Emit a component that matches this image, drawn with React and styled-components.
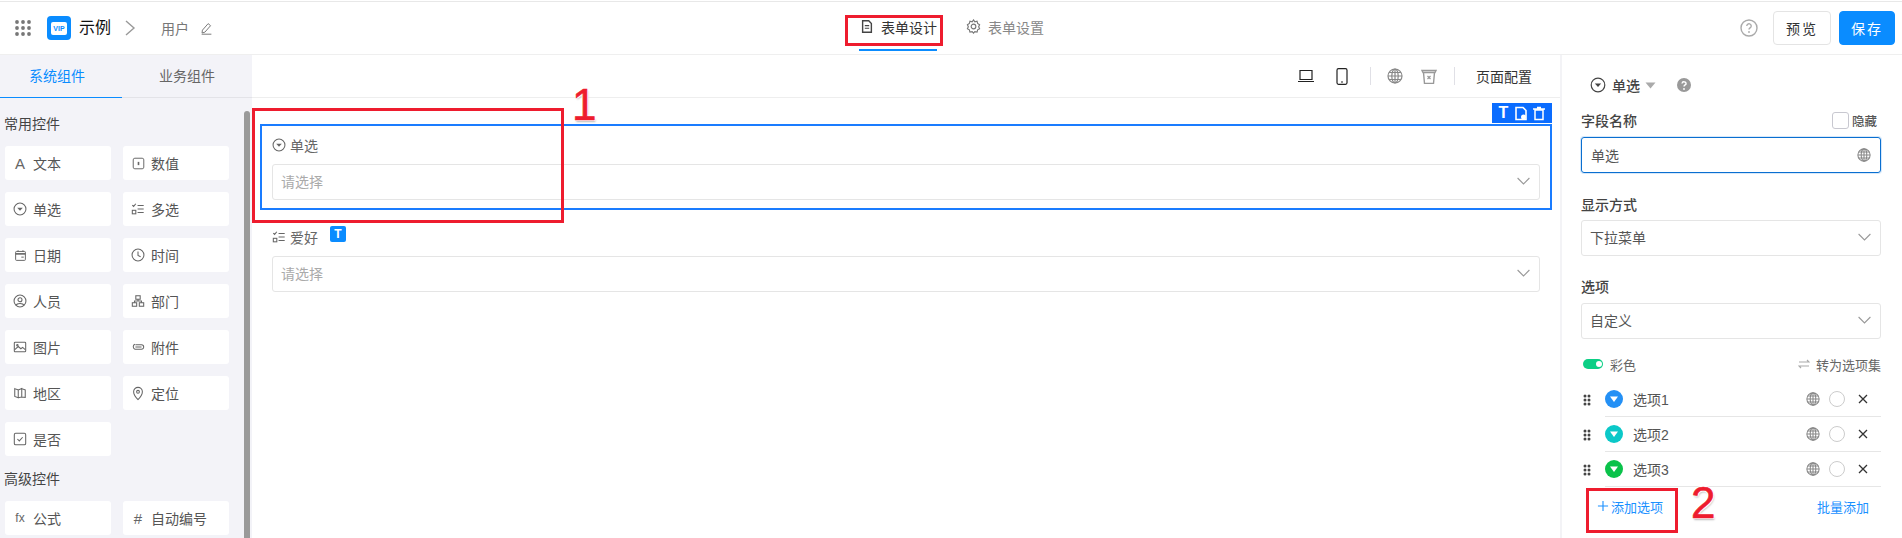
import React from "react";
import styled, { createGlobalStyle } from "styled-components";

const Global = createGlobalStyle`
  html, body { margin: 0; padding: 0; background: #fff; }
  body { font-family: "Liberation Sans", "Noto Sans CJK SC", sans-serif; color: #333; }
  * { box-sizing: border-box; }
`;

const Page = styled.div`
  position: relative;
  width: 1902px;
  height: 538px;
  padding-top: 1px;
  overflow: hidden;
  display: flex;
  flex-direction: column;
  background: #fff;
`;
const Header = styled.header`
  flex: none;
  height: 54px;
  border-top: 1px solid #e8e8e8;
  border-bottom: 1px solid #efefef;
  display: grid;
  grid-template-columns: 1fr auto 1fr;
  align-items: center;
  padding: 0 7px 0 14px;
`;
const Brand = styled.div`display: flex; align-items: center;`;
const Logo = styled.div`
  width: 24px; height: 24px; margin-left: 15px; border-radius: 4px; background: #0a8cff;
  display: flex; align-items: center; justify-content: center;
`;
const LogoInner = styled.span`
  width: 16px; height: 13px; border-radius: 2px; background: #fff; color: #0a8cff;
  font: 700 7px/13px "Liberation Sans", sans-serif; text-align: center; letter-spacing: 0;
`;
const AppName = styled.span`margin-left: 8px; font-size: 16px; line-height: 24px; color: #111;`;
const PageName = styled.span`margin-left: 25px; font-size: 14px; color: #777;`;
const Tabs = styled.nav`display: flex; align-items: flex-start; gap: 28px; height: 100%; transform: translateX(-3px);`;
const TopTab = styled.div`
  height: 49px; display: flex; align-items: center; gap: 7px; font-size: 14px; padding: 2px 0 0 1px;
  color: ${p => (p.$active ? "#333" : "#888")};
  border-bottom: 2px solid ${p => (p.$active ? "#0a8cff" : "transparent")};
`;
const Actions = styled.div`display: flex; align-items: center; justify-content: flex-end;`;
const GhostBtn = styled.button`
  width: 58px; height: 34px; margin-left: 15px; border: 1px solid #e4e4e4; border-radius: 4px;
  background: #fff; color: #333; font: 14px "Liberation Sans", "Noto Sans CJK SC", sans-serif; letter-spacing: 2px;
`;
const PrimaryBtn = styled(GhostBtn)`
  width: 56px; margin-left: 8px; border-color: #0a8cff; background: #0a8cff; color: #fff;
`;
const Body = styled.div`flex: 1; min-height: 0; display: flex;`;

const Sidebar = styled.aside`
  flex: none; width: 252px; background: #f3f3f8; display: flex; flex-direction: column; overflow: hidden;
`;
const SideTabs = styled.div`
  flex: none; height: 43px; display: grid; grid-template-columns: 122px 130px; border-bottom: 1px solid #e3e3e8;
`;
const SideTab = styled.div`
  display: flex; align-items: center; justify-content: center; font-size: 14px; height: 43px;
  padding: 0 ${p => (p.$active ? 8 : 0)}px 3px 0;
  color: ${p => (p.$active ? "#0a8cff" : "#666")};
  border-bottom: 1px solid ${p => (p.$active ? "#0a8cff" : "transparent")};
`;
const SideBody = styled.div`flex: 1; min-height: 0; display: flex;`;
const SideList = styled.div`width: 244px; padding: 16px 0 0 5px;`;
const GroupTitle = styled.div`
  margin-left: -1px; height: 20px; line-height: 20px; font-size: 14px; color: #444; margin-bottom: 12px;
`;
const CardGrid = styled.div`
  display: grid; grid-template-columns: 106px 106px; gap: 12px; margin-bottom: 13px;
`;
const Card = styled.div`
  height: 34px; background: #fff; border-radius: 3px; display: flex; align-items: center;
  padding-left: 7px; gap: 5px; font-size: 14px; color: #555;
`;
const CardIcon = styled.span`
  width: 16px; display: flex; justify-content: center; align-items: center; color: #666; font-size: 12px; flex: none;
`;
const Scrollbar = styled.div`
  width: 6px; margin-top: 13px; background: #9a9a9a; border-radius: 3px 3px 0 0;
`;

const Main = styled.main`flex: 1; min-width: 0; display: flex; flex-direction: column;`;
const Toolbar = styled.div`
  flex: none; height: 43px; border-bottom: 1px solid #eee; display: flex; align-items: center;
  justify-content: flex-end; padding-right: 28px; color: #222;
`;
const ToolGroup = styled.div`display: flex; align-items: center; gap: ${p => p.$gap || 22}px;`;
const Divider = styled.span`width: 1px; height: 18px; background: #e0e0e6; margin: 0 ${p => p.$r || 16}px 0 ${p => p.$l || 22}px;`;
const ToolText = styled.span`font-size: 14px; color: #333; margin-left: 5px;`;
const Canvas = styled.div`padding: 26px 8px 0;`;
const FieldBox = styled.div`
  position: relative; padding: ${p => (p.$selected ? "10px 10px 8px" : "18px 12px 0")};
  border: ${p => (p.$selected ? "2px solid #1a7cff" : "none")};
`;
const FieldLabel = styled.div`
  display: flex; align-items: center; gap: 4px; height: 18px; font-size: 14px; color: #666; margin-bottom: 10px;
`;
const TBadge = styled.span`
  width: 16px; height: 16px; margin: -7px 0 0 8px; border-radius: 2px; background: #0a8cff; color: #fff;
  font: 700 12px/16px "Liberation Sans", sans-serif; text-align: center;
`;
const FakeSelect = styled.div`
  height: 36px; border: 1px solid #e5e5e5; border-radius: 3px; display: flex; align-items: center;
  justify-content: space-between; padding: 0 9px 2px 8px; font-size: 14px;
  color: ${p => (p.$placeholder ? "#aaa" : "#555")}; background: #fff;
`;
const FieldTools = styled.div`
  position: absolute; right: -2px; top: -23px; width: 60px; height: 20px; background: #0a6cff;
  display: flex; align-items: center; justify-content: space-evenly; color: #fff;
`;

const Panel = styled.aside`
  flex: none; width: 342px; border-left: 2px solid #f3f3f6; padding: 0 21px 0 19px; display: flex; flex-direction: column;
`;
const PanelHead = styled.div`
  height: 20px; margin-top: 20px; padding-left: 9px; display: flex; align-items: center; font-size: 14px;
  font-weight: 500; color: #444;
`;
const SectionHead = styled.div`
  display: flex; justify-content: space-between; align-items: center; height: 20px;
  margin: ${p => p.$top}px 0 ${p => p.$bottom}px; font-size: 14px; color: #444; font-weight: 500;
`;
const Hide = styled.label`display: flex; align-items: center; gap: 3px; font-size: 12.5px; color: #555; margin-right: 4px;`;
const Check = styled.span`width: 17px; height: 17px; border: 1px solid #c8c8d0; border-radius: 3px; background: #fff;`;
const TextField = styled.div`
  height: 36px; border: 1px solid #0a6fd0; border-radius: 3px; box-shadow: 0 0 0 1px #d6e8fa;
  display: flex; align-items: center; justify-content: space-between; padding: 0 9px; font-size: 14px; color: #555;
`;
const ColorRow = styled.div`
  height: 20px; margin: 15px 0 8px; display: flex; align-items: center; justify-content: space-between;
  font-size: 13px; color: #666;
`;
const Left = styled.div`display: flex; align-items: center; gap: 7px;`;
const Toggle = styled.span`
  position: relative; width: 20px; height: 10px; margin-left: 2px; border-radius: 5px; background: #0ccf85;
  &::after { content: ""; position: absolute; right: 1px; top: 2px; width: 6px; height: 6px; border-radius: 50%; background: #fff; }
`;
const OptionRow = styled.div`
  height: 35px; padding-left: 2px; display: flex; align-items: center; color: #555; font-size: 14px;
`;
const OptionInner = styled.div`
  flex: 1; height: 35px; margin-left: 14px; border-bottom: 1px solid #e6e6e6; display: flex; align-items: center;
`;
const OptionDot = styled.span`
  width: 18px; height: 18px; border-radius: 50%; background: ${p => p.$color}; flex: none;
  display: flex; align-items: center; justify-content: center;
`;
const OptionName = styled.span`flex: 1; margin-left: 10px;`;
const Radio = styled.span`
  width: 16px; height: 16px; border-radius: 50%; border: 1px solid #ccc; margin: 0 13px 0 9px; flex: none;
`;
const CloseWrap = styled.span`display: flex; margin-right: 13px;`;
const AddRow = styled.div`
  height: 38px; display: flex; align-items: center; justify-content: space-between; color: #1a90ff; font-size: 13px;
  padding: 0 12px 0 16px;
`;
const AddBtn = styled.span`display: flex; align-items: center; gap: 2px;`;

const RedBox = styled.div`
  position: absolute; left: ${p => p.$x}px; top: ${p => p.$y}px; width: ${p => p.$w}px; height: ${p => p.$h}px;
  border: 3px solid #ee1c2e; pointer-events: none;
`;
const Mark = styled.div`
  position: absolute; left: ${p => p.$x}px; top: ${p => p.$y}px; color: #ee1c2e; pointer-events: none;
  font: 44px/44px "Liberation Sans", sans-serif; -webkit-text-stroke: 0.6px #ee1c2e;
  text-shadow: 1px 1px 0 #fff, -1px -1px 0 #fff, 1px -1px 0 #fff, -1px 1px 0 #fff, 1px 2px 2px #bbb;
`;

const S = ({ w = 16, h = 16, vb = "0 0 16 16", children, style }) => (
  <svg width={w} height={h} viewBox={vb} fill="none" stroke="currentColor" strokeWidth="1.2" style={{ display: "block", flex: "none", ...style }}>
    {children}
  </svg>
);
const SelectGlyph = ({ s = 14 }) => (
  <S w={s} h={s}><circle cx="8" cy="8" r="6.8" /><path d="M4.8 6.6h6.4L8 10z" fill="currentColor" stroke="none" /></S>
);
const MultiGlyph = () => (
  <S w={14} h={14}>
    <path d="M1.5 3.5l1.5 1.5 2.5-3M7.5 4h7M7.5 8h7M7.5 12h7" /><rect x="1.5" y="9.5" width="4" height="4" />
  </S>
);
const Globe = ({ s = 16 }) => (
  <S w={s} h={s} style={{ color: "#888" }}>
    <circle cx="8" cy="8" r="7" /><ellipse cx="8" cy="8" rx="3.2" ry="7" /><path d="M1 8h14M2 4.5h12M2 11.5h12M8 1v14" />
  </S>
);
const Chevron = () => (
  <S w={13} h={8} vb="0 0 13 8" style={{ color: "#999" }}><path d="M.6 1l5.9 6 5.9-6" strokeWidth="1.1" /></S>
);
const Close = () => (
  <S w={10} h={10} vb="0 0 10 10" style={{ color: "#333" }}><path d="M1 1l8 8M9 1L1 9" strokeWidth="1.3" /></S>
);
const Dots = ({ n = 3, r = 1.5, gap = 4, color = "#444" }) => {
  const cols = gap === 6 ? 3 : 2;
  const pts = [];
  for (let y = 0; y < n; y++) for (let x = 0; x < cols; x++) pts.push([x, y]);
  return (
    <svg width={cols * gap} height={n * gap} style={{ display: "block", flex: "none", color }}>
      {pts.map(([x, y]) => <circle key={`${x}${y}`} cx={gap / 2 + x * gap} cy={gap / 2 + y * gap} r={r} fill="currentColor" />)}
    </svg>
  );
};
const TriDown = () => (
  <svg width="10" height="8" viewBox="0 0 10 8" style={{ display: "block" }}><path d="M1 1.5h8L5 7z" fill="#fff" /></svg>
);

const icons = {
  text: <span style={{ fontSize: 15 }}>A</span>,
  number: <S w={13} h={13}><rect x="1.5" y="1.5" width="13" height="13" rx="2" /><path d="M7 6h2v4H7z" fill="currentColor" stroke="none" /></S>,
  select: <SelectGlyph s={14} />,
  multi: <MultiGlyph />,
  date: <S w={13} h={13}><rect x="2" y="3" width="12" height="11" rx="1" /><path d="M2 6h12" strokeWidth="2" /><path d="M5 1.5v2M11 1.5v2M9 10h3" /></S>,
  time: <S w={14} h={14}><circle cx="8" cy="8" r="6.8" /><path d="M8 4v4.5l3 1.5" /></S>,
  user: <S w={14} h={14}><circle cx="8" cy="8" r="6.8" /><circle cx="8" cy="6.5" r="2.3" /><path d="M3.5 13c1-3 8-3 9 0" /></S>,
  dept: <S w={14} h={14}><rect x="5.5" y="2" width="5" height="4" /><rect x="1.5" y="10" width="5" height="4" /><rect x="9.5" y="10" width="5" height="4" /><path d="M8 6v2M4 10V8h8v2" /></S>,
  image: <S w={14} h={14}><rect x="1.5" y="2.5" width="13" height="11" rx="1" /><path d="M2 11l4-3.5 3 2.5 2-1.5 3 2.5" /><circle cx="5" cy="6" r=".8" /></S>,
  attach: <S w={14} h={14}><path d="M5 5.5h7a2.5 2.5 0 010 5H4.5a3 3 0 010-5.6M5 8h7" /></S>,
  map: <S w={14} h={14}><path d="M2 3l4 1.5v9L2 12zM6 4.5L10 3v9.5l-4 1M10 3l4 1.5V13l-4-.5z" /></S>,
  pin: <S w={14} h={15}><path d="M8 15s-5-5-5-9a5 5 0 0110 0c0 4-5 9-5 9z" /><circle cx="8" cy="6" r="1.6" /></S>,
  bool: <S w={14} h={14}><rect x="1.5" y="1.5" width="13" height="13" rx="1.5" /><path d="M5 8l2.2 2.2L11 6" /></S>,
  fx: <span style={{ fontSize: 12, fontFamily: "Liberation Sans" }}>fx</span>,
  hash: <span style={{ fontSize: 15, fontFamily: "Liberation Sans" }}>#</span>,
};

const common = [
  ["text", "文本"], ["number", "数值"], ["select", "单选"], ["multi", "多选"], ["date", "日期"], ["time", "时间"],
  ["user", "人员"], ["dept", "部门"], ["image", "图片"], ["attach", "附件"], ["map", "地区"], ["pin", "定位"], ["bool", "是否"],
];
const advanced = [["fx", "公式"], ["hash", "自动编号"]];
const options = [["选项1", "#2490f5"], ["选项2", "#0bc8c8"], ["选项3", "#0ac24a"]];

const CardList = ({ items }) => (
  <CardGrid>
    {items.map(([k, t]) => (
      <Card key={t}><CardIcon>{icons[k]}</CardIcon>{t}</Card>
    ))}
  </CardGrid>
);

export default function App() {
  return (
    <Page>
      <Global />
      <Header>
        <Brand>
          <Dots n={3} r={1.9} gap={6} color="#777" />
          <Logo><LogoInner>VIP</LogoInner></Logo>
          <AppName>示例</AppName>
          <S w={12} h={18} vb="0 0 12 18" style={{ marginLeft: 13, color: "#999" }}><path d="M2 2l8 7-8 7" strokeWidth="1.4" /></S>
          <PageName>用户</PageName>
          <S w={13} h={13} style={{ marginLeft: 11, color: "#777" }}><path d="M3 10l7-8 3 2.5-7 8-3.5 1zM2 15h12" /></S>
        </Brand>
        <Tabs>
          <TopTab $active>
            <S w={14} h={15} style={{ color: "#444" }}><path d="M3 1.5h7l3 3v10H3z" strokeWidth="1.6" /><path d="M5.5 7h5M5.5 10h5" /></S>
            表单设计
          </TopTab>
          <TopTab>
            <S w={15} h={15} style={{ color: "#777" }}><circle cx="8" cy="8" r="2.5" /><path d="M8 1l1.4 2 2.4-.6.6 2.4 2.1 1.3-1 2.2 1 2.2-2.1 1.1-.6 2.4-2.4-.5L8 15l-1.4-1.5-2.4.5-.6-2.4-2.1-1.1 1-2.2-1-2.2 2.1-1.3.6-2.4 2.4.6z" /></S>
            表单设置
          </TopTab>
        </Tabs>
        <Actions>
          <S w={18} h={18} vb="0 0 18 18" style={{ color: "#aaa" }}>
            <circle cx="9" cy="9" r="8" strokeWidth="1.4" />
            <path d="M6.8 7a2.2 2.2 0 114 1.2c-.7.8-1.8 1-1.8 2.3" strokeWidth="1.4" /><circle cx="9" cy="13" r=".9" fill="currentColor" stroke="none" />
          </S>
          <GhostBtn>预览</GhostBtn>
          <PrimaryBtn>保存</PrimaryBtn>
        </Actions>
      </Header>
      <Body>
        <Sidebar>
          <SideTabs>
            <SideTab $active>系统组件</SideTab>
            <SideTab>业务组件</SideTab>
          </SideTabs>
          <SideBody>
            <SideList>
              <GroupTitle>常用控件</GroupTitle>
              <CardList items={common} />
              <GroupTitle>高级控件</GroupTitle>
              <CardList items={advanced} />
            </SideList>
            <Scrollbar />
          </SideBody>
        </Sidebar>
        <Main>
          <Toolbar>
            <ToolGroup $gap={22}>
              <S w={16} h={14} vb="0 0 16 14"><path d="M2 1.5h12v9H2zM0 12.5h16" /></S>
              <S w={12} h={17} vb="0 0 12 17"><rect x="1" y=".7" width="10" height="15.6" rx="1.5" /><path d="M5 14h2" /></S>
            </ToolGroup>
            <Divider />
            <ToolGroup $gap={18}>
              <Globe />
              <S w={16} h={15} vb="0 0 16 15" style={{ color: "#999" }}><path d="M1 1.5h14l-1 2H2zM2.5 3.5l1 11h9l1-11" strokeWidth="1.4" /><path d="M6.5 7l3 3M9.5 7l-3 3" /></S>
            </ToolGroup>
            <Divider $l={17} $r={16} />
            <ToolText>页面配置</ToolText>
          </Toolbar>
          <Canvas>
            <FieldBox $selected>
              <FieldTools>
                <span style={{ font: '700 16px/20px "Liberation Sans"' }}>T</span>
                <S w={12} h={15} vb="0 0 12 14"><path d="M1 1h7l3 3v9H1z" strokeWidth="1.6" /><circle cx="8.5" cy="10.5" r="2.5" fill="#fff" stroke="none" /></S>
                <S w={12} h={15} vb="0 0 12 14"><path d="M0 2.5h12M4 1h4M2 3.5h8V13H2z" strokeWidth="1.5" /></S>
              </FieldTools>
              <FieldLabel><SelectGlyph s={14} />单选</FieldLabel>
              <FakeSelect $placeholder>请选择<Chevron /></FakeSelect>
            </FieldBox>
            <FieldBox>
              <FieldLabel><MultiGlyph />爱好<TBadge>T</TBadge></FieldLabel>
              <FakeSelect $placeholder>请选择<Chevron /></FakeSelect>
            </FieldBox>
          </Canvas>
        </Main>
        <Panel>
          <PanelHead>
            <SelectGlyph s={16} />
            <span style={{ marginLeft: 6 }}>单选</span>
            <svg width="11" height="7" viewBox="0 0 11 7" style={{ marginLeft: 5 }}><path d="M0.5 .5h10L5.5 6.5z" fill="#aaa" /></svg>
            <svg width="14" height="14" viewBox="0 0 14 14" style={{ marginLeft: 21 }}>
              <circle cx="7" cy="7" r="7" fill="#999" />
              <path d="M5 5.5a2 2 0 114 .7c-.6.8-2 1-2 2.3" fill="none" stroke="#fff" strokeWidth="1.4" /><circle cx="7" cy="11" r=".9" fill="#fff" />
            </svg>
          </PanelHead>
          <SectionHead $top={15} $bottom={7}>字段名称<Hide><Check />隐藏</Hide></SectionHead>
          <TextField>单选<Globe s={14} /></TextField>
          <SectionHead $top={21} $bottom={6}>显示方式</SectionHead>
          <FakeSelect>下拉菜单<Chevron /></FakeSelect>
          <SectionHead $top={20} $bottom={7}>选项</SectionHead>
          <FakeSelect>自定义<Chevron /></FakeSelect>
          <ColorRow>
            <Left><Toggle />彩色</Left>
            <Left style={{ gap: 6 }}>
              <S w={12} h={10} vb="0 0 12 10" style={{ color: "#aaa" }}><path d="M1 3h10L9 1M11 7H1l2 2" /></S>
              转为选项集
            </Left>
          </ColorRow>
          {options.map(([name, color]) => (
            <OptionRow key={name}>
              <Dots n={3} r={1.5} gap={4} color="#444" />
              <OptionInner>
                <OptionDot $color={color}><TriDown /></OptionDot>
                <OptionName>{name}</OptionName>
                <Globe s={14} />
                <Radio />
                <CloseWrap><Close /></CloseWrap>
              </OptionInner>
            </OptionRow>
          ))}
          <AddRow>
            <AddBtn>
              <S w={12} h={12} vb="0 0 13 13"><path d="M6.5 1v11M1 6.5h11" /></S>
              添加选项
            </AddBtn>
            <span>批量添加</span>
          </AddRow>
        </Panel>
      </Body>
      <RedBox $x={845} $y={15} $w={98} $h={31} />
      <RedBox $x={252} $y={108} $w={312} $h={115} />
      <RedBox $x={1586} $y={488} $w={92} $h={45} />
      <Mark $x={572} $y={83}>1</Mark>
      <Mark $x={1691} $y={481}>2</Mark>
    </Page>
  );
}
